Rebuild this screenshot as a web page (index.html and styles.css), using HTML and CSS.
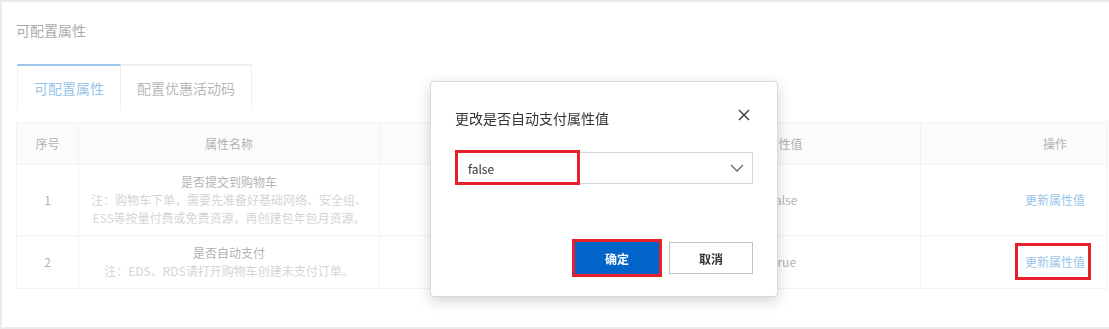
FILE: index.html
```html
<!DOCTYPE html>
<html lang="zh-CN">
<head>
    <meta charset="UTF-8">
    <meta name="viewport" content="width=device-width, initial-scale=1.0">
    <title>可配置属性</title>
    <link rel="stylesheet" href="styles.css">
</head>
<body>
    <div class="page">
        <div class="page-title">可配置属性</div>

        <!-- Tabs -->
        <div class="tabs">
            <div class="tab active">可配置属性</div>
            <div class="tab">配置优惠活动码</div>
        </div>

        <!-- Attribute table -->
        <table class="attr-table">
            <colgroup>
                <col style="width: 62px">
                <col style="width: 301px">
                <col style="width: 261px">
                <col style="width: 280px">
                <col>
            </colgroup>
            <thead>
                <tr>
                    <th>序号</th>
                    <th>属性名称</th>
                    <th>属性标识</th>
                    <th class="val">属性值</th>
                    <th class="op">操作</th>
                </tr>
            </thead>
            <tbody>
                <tr>
                    <td>1</td>
                    <td>
                        <div class="name">是否提交到购物车</div>
                        <div class="note">注：购物车下单，需要先准备好基础网络、安全组、<br>ESS等按量付费或免费资源，再创建包年包月资源。</div>
                    </td>
                    <td>submitToCart</td>
                    <td class="val">false</td>
                    <td class="op"><a href="#" class="link">更新属性值</a></td>
                </tr>
                <tr>
                    <td>2</td>
                    <td>
                        <div class="name">是否自动支付</div>
                        <div class="note">注：EDS、RDS请打开购物车创建未支付订单。</div>
                    </td>
                    <td>autoPay</td>
                    <td class="val">true</td>
                    <td class="op"><a href="#" class="link marked">更新属性值</a></td>
                </tr>
            </tbody>
        </table>
    </div>

    <!-- Modal mask + dialog -->
    <div class="mask"></div>
    <div class="dialog">
        <div class="dialog-header">
            <span class="dialog-title">更改是否自动支付属性值</span>
            <svg class="close" width="12" height="12" viewBox="0 0 12 12">
                <path d="M1 1 L11 11 M11 1 L1 11" stroke="#333" stroke-width="1.3" fill="none"/>
            </svg>
        </div>
        <div class="dialog-body">
            <div class="select">
                <span class="select-value">false</span>
                <svg class="arrow" width="14" height="8" viewBox="0 0 14 8">
                    <path d="M1 1 L7 7 L13 1" stroke="#666" stroke-width="1.3" fill="none"/>
                </svg>
                <span class="mark-box"></span>
            </div>
        </div>
        <div class="dialog-footer">
            <button class="btn btn-primary">确定</button>
            <button class="btn">取消</button>
        </div>
    </div>
</body>
</html>
```

FILE: styles.css
```css
body {
    margin: 0;
    font-family: "Noto Sans CJK SC", "Noto Sans", sans-serif;
    color: #333;
    background-color: #fff;
}
.page {
    height: 329px;
    box-sizing: border-box;
    border: 2px solid #d0d0d0;
    border-right: none;
    padding: 18px 1px 0 14px;
}
.page-title {
    font-size: 14px;
    line-height: 20px;
    color: #333;
}
.tabs {
    display: flex;
    margin-top: 24px;
    margin-left: 1px;
}
.tab {
    height: 44px;
    line-height: 44px;
    padding: 0 16px;
    font-size: 14px;
    color: #555;
    border: 1px solid #dcdcdc;
    border-top: 2px solid #dcdcdc;
    border-bottom: none;
}
.tab + .tab {
    border-left: none;
}
.tab.active {
    color: #0070cc;
    border-top-color: #1677d2;
}
.attr-table {
    width: 100%;
    margin-top: 12px;
    border-collapse: collapse;
    table-layout: fixed;
    font-size: 12px;
}
.attr-table th,
.attr-table td {
    border: 1px solid #e2e2e2;
    text-align: center;
    padding: 8px 0;
    line-height: 18px;
    color: #444;
    font-weight: normal;
}
.attr-table th {
    height: 25px;
    background-color: #f5f5f5;
}
.attr-table .val {
    padding-left: 8px;
}
.attr-table .op {
    padding-left: 82px;
}
.note {
    color: #999;
}
.link {
    color: #0070cc;
    text-decoration: none;
}
.link.marked {
    position: relative;
}
.link.marked::after {
    content: "";
    position: absolute;
    left: -10px;
    right: -6px;
    top: -10px;
    bottom: -10px;
    border: 3px solid #e8202b;
    z-index: 20;
}
.mask {
    position: fixed;
    inset: 0;
    background-color: rgba(255, 255, 255, 0.58);
    z-index: 10;
}
.dialog {
    position: fixed;
    left: 430px;
    top: 81px;
    width: 348px;
    height: 216px;
    box-sizing: border-box;
    padding: 26px 24px 24px;
    background-color: #fff;
    border: 1px solid #d8d8d8;
    border-radius: 4px;
    box-shadow: 0 4px 14px rgba(0, 0, 0, 0.18);
    z-index: 30;
}
.dialog-header {
    display: flex;
    justify-content: space-between;
    align-items: center;
    line-height: 20px;
}
.dialog-title {
    font-size: 14px;
    color: #333;
}
.close {
    margin-right: 3px;
    margin-top: -6px;
}
.dialog-body {
    margin-top: 24px;
}
.select {
    position: relative;
    height: 32px;
    box-sizing: border-box;
    border: 1px solid #d6d6d6;
    display: flex;
    align-items: center;
    justify-content: space-between;
    padding: 0 8px 0 12px;
    font-size: 12px;
}
.select-value {
    color: #333;
}
.mark-box {
    position: absolute;
    left: -1px;
    top: -3px;
    width: 125px;
    height: 35px;
    box-sizing: border-box;
    border: 3px solid #e8202b;
}
.dialog-footer {
    display: flex;
    justify-content: flex-end;
    gap: 10px;
    margin-top: 58px;
}
.btn {
    width: 84px;
    height: 32px;
    font-family: inherit;
    font-size: 12px;
    font-weight: bold;
    color: #333;
    background-color: #fff;
    border: 1px solid #c4c4c4;
    padding: 0;
}
.btn-primary {
    color: #fff;
    background-color: #0064c8;
    border-color: #0064c8;
    outline: 3px solid #e8202b;
}
```
